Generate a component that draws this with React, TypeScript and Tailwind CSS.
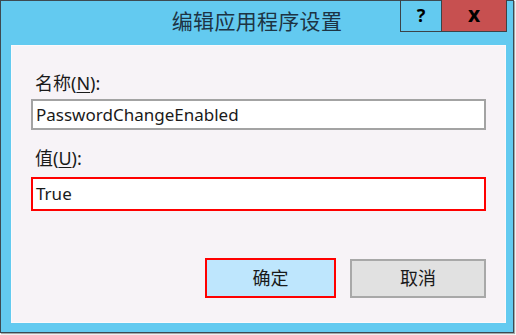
const font = "font-['Noto_Sans','Noto_Sans_CJK_SC',sans-serif]"

export default function App() {
  return (
    <div className={`w-[516px] h-[335px] bg-white ${font}`}>
      <div className="w-[514px] h-[333px] bg-[#63CAF0] border border-[#3d4a52] flex flex-col shadow-[1px_1px_1px_rgba(0,0,0,0.35)]">
        {/* title bar */}
        <div className="relative h-[44px] shrink-0 flex items-center justify-center pb-[2px]">
          <span className="text-[21px] text-[#1d3444] tracking-[0.3px]">编辑应用程序设置</span>
          <div className="absolute right-[6px] top-[-1px] flex border border-t-0 border-[#3b4348] h-[32px]">
            <div className="w-[40px] flex items-center justify-center text-[18px] font-bold text-black">?</div>
            <div className="w-[65px] bg-[#C75050] border-l border-[#3b4348] flex items-center justify-center text-[21px] font-bold text-black leading-none pb-[3px]">
              x
            </div>
          </div>
        </div>

        {/* content */}
        <div className="flex-1 ml-[10px] mr-[7px] mb-[9px] bg-[#F7F3F7] border border-[#fbf9fb] flex flex-col px-[19px] pt-[25px]">
          <div className="h-[24px] leading-[24px] text-[18px] text-[#1a1a1a] pl-[4px]">
            名称(<span className="underline underline-offset-2">N</span>):
          </div>
          <div className="mt-[4px] h-[31px] bg-white border-2 border-[#a3a3a3] flex items-center px-[3px] text-[17px] text-[#1a1a1a]">
            PasswordChangeEnabled
          </div>

          <div className="mt-[16px] h-[24px] leading-[24px] text-[18px] text-[#1a1a1a] pl-[4px]">
            值(<span className="underline underline-offset-2">U</span>):
          </div>
          <div className="mt-[7px] h-[34px] bg-white border-2 border-[#ff0000] flex items-center px-[3px] text-[17px] text-[#1a1a1a]">
            True
          </div>

          <div className="mt-[47px] flex items-center justify-end gap-[14px]">
            <div className="w-[131px] h-[40px] bg-[#BEE6FD] border-2 border-[#ff0000] flex items-center justify-center text-[18px] text-[#1a1a1a]">
              确定
            </div>
            <div className="w-[136px] h-[39px] bg-[#E1E1E1] border-2 border-[#a8a8a8] flex items-center justify-center text-[18px] text-[#1a1a1a]">
              取消
            </div>
          </div>
        </div>
      </div>
    </div>
  )
}
